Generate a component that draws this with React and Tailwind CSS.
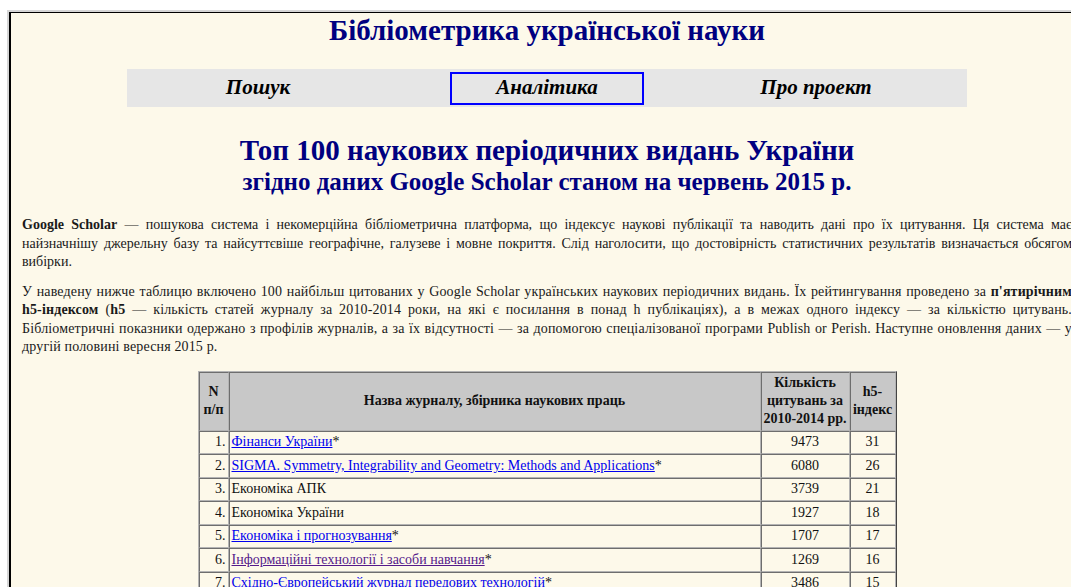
import React from 'react';

const rows = [
  { n: 1, title: 'Фінанси України', link: true, star: true, cites: 9473, h5: 31 },
  { n: 2, title: 'SIGMA. Symmetry, Integrability and Geometry: Methods and Applications', link: true, star: true, cites: 6080, h5: 26 },
  { n: 3, title: 'Економіка АПК', cites: 3739, h5: 21 },
  { n: 4, title: 'Економіка України', cites: 1927, h5: 18 },
  { n: 5, title: 'Економіка і прогнозування', link: true, star: true, cites: 1707, h5: 17 },
  { n: 6, title: 'Інформаційні технології і засоби навчання', link: true, visited: true, star: true, cites: 1269, h5: 16 },
  { n: 7, title: 'Східно-Європейський журнал передових технологій', link: true, star: true, cites: 3486, h5: 15 },
  { n: 8, title: 'Проблеми економіки', cites: 1208, h5: 15 },
];

const cell = 'border border-t-[#6e6e6e] border-l-[#6e6e6e] border-r-[#b4b4b4] border-b-[#b4b4b4]';

export default function App() {
  return (
    <div className="h-[587px] w-[1071px] overflow-hidden bg-white pl-[7px] pt-[10px] font-['Liberation_Serif',serif]">
      <div className="h-[600px] w-[1100px] border-l-2 border-t-2 border-[#d6d6d6]">
        <div className="h-full w-full border-l-2 border-t-[1px] border-black bg-[#fdf9ea]">
          <div className="w-[1072px] px-[11px] pt-[1px]">
            <h1 className="text-center text-[29px] font-bold leading-[32px] text-[#000080]">
              Бібліометрика української науки
            </h1>

            {/* menu bar, middle item is the current section */}
            <nav className="mx-auto mt-[23px] grid h-[38px] w-[840px] grid-cols-[262px_276px_302px] items-center bg-[#e6e6e6] text-[21px] font-bold italic text-black">
              <span className="text-center">Пошук</span>
              <span className="ml-[61px] flex h-[33px] w-[194px] items-center justify-center border-2 border-[#0000ff]">
                Аналітика
              </span>
              <span className="text-center">Про проект</span>
            </nav>

            <h2 className="mt-[27px] text-center text-[29px] font-bold leading-[32px] text-[#000080]">
              Топ 100 наукових періодичних видань України
            </h2>
            <h3 className="mt-[2px] text-center text-[25px] font-bold leading-[28px] text-[#000080]">
              згідно даних Google Scholar станом на червень 2015 р.
            </h3>

            <p className="mt-[20px] text-justify text-[14px] leading-[18.5px] text-[#1a1a1a]">
              <b>Google Scholar</b> — пошукова система і некомерційна бібліометрична платформа, що індексує наукові
              публікації та наводить дані про їх цитування. Ця система має найзначнішу джерельну базу та найсуттєвіше
              географічне, галузеве і мовне покриття. Слід наголосити, що достовірність статистичних результатів
              визначається обсягом вибірки.
            </p>
            <p className="mt-[11px] text-justify text-[14px] leading-[18.5px] tracking-[0.15px] text-[#1a1a1a]">
              У наведену нижче таблицю включено 100 найбільш цитованих у Google Scholar українських наукових
              періодичних видань. Їх рейтингування проведено за <b>п'ятирічним <span className="whitespace-nowrap">h5-індексом</span></b> (<b>h5</b> — кількість
              статей журналу за 2010-2014 роки, на які є посилання в понад h публікаціях), а в межах одного індексу — за
              кількістю цитувань. Бібліометричні показники одержано з профілів журналів, а за їх відсутності — за
              допомогою спеціалізованої програми Publish or Perish. Наступне оновлення даних — у другій половині
              вересня 2015 р.
            </p>

            <table className="mx-auto mt-[14px] w-[699px] border-separate border-spacing-0 border border-t-[#b4b4b4] border-l-[#b4b4b4] border-r-[#444] border-b-[#444] text-[14px] leading-[18px] text-[#111]">
              <colgroup>
                <col className="w-[30px]" />
                <col />
                <col className="w-[89px]" />
                <col className="w-[46px]" />
              </colgroup>
              <thead>
                <tr className="h-[59px] bg-[#c8c8c8] font-bold leading-[18px]">
                  <th className={`${cell} px-[1px]`}>
                    N<br />п/п
                  </th>
                  <th className={cell}>Назва журналу, збірника наукових праць</th>
                  <th className={`${cell} px-0`}>
                    Кількість
                    <br />
                    цитувань за
                    <br />
                    2010-2014 рр.
                  </th>
                  <th className={`${cell} px-0`}>
                    h5-
                    <br />
                    індекс
                  </th>
                </tr>
              </thead>
              <tbody>
                {rows.map((r) => (
                  <tr key={r.n} className="h-[23.5px]">
                    <td className={`${cell} pr-[2px] text-right`}>{r.n}.</td>
                    <td className={`${cell} px-[2px]`}>
                      {r.link ? (
                        <a href="#" className={`underline ${r.visited ? 'text-[#551a8b]' : 'text-[#0000ee]'}`}>
                          {r.title}
                        </a>
                      ) : (
                        r.title
                      )}
                      {r.star && '*'}
                    </td>
                    <td className={`${cell} text-center`}>{r.cites}</td>
                    <td className={`${cell} text-center`}>{r.h5}</td>
                  </tr>
                ))}
              </tbody>
            </table>
          </div>
        </div>
      </div>
    </div>
  );
}
